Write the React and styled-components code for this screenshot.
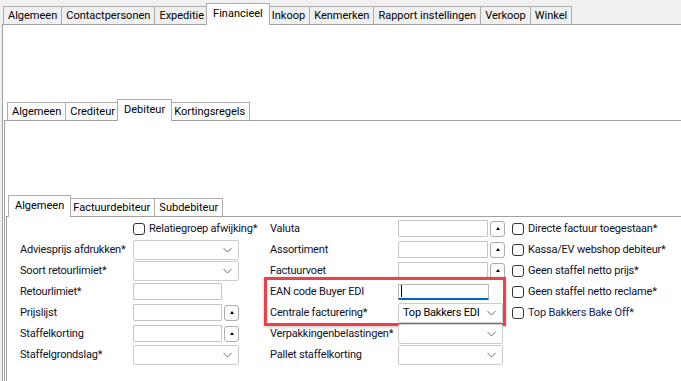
import styled, { createGlobalStyle, css } from "styled-components";

const GlobalStyle = createGlobalStyle`
  html, body {
    margin: 0;
    height: 100%;
    overflow: hidden;
    background: #f0f0f0;
  }
  body {
    font-family: Roboto, "Liberation Sans", Arial, sans-serif;
    font-size: 11px;
    letter-spacing: -0.2px;
    color: #101024;
  }
  #root {
    height: 100%;
  }
`;

const Screen = styled.div`
  box-sizing: border-box;
  height: 100%;
  display: flex;
  flex-direction: column;
  padding: 3px 0 0 2px;
`;

const TabControl = styled.div`
  flex: 1;
  display: flex;
  flex-direction: column;
  min-height: 0;
`;

const TabStrip = styled.div`
  position: relative;
  z-index: 1;
  display: flex;
  align-items: flex-end;
  height: 21px;
  padding-left: ${(p) => p.$inset}px;
`;

const Tab = styled.div`
  box-sizing: border-box;
  position: relative;
  display: flex;
  align-items: center;
  white-space: nowrap;
  height: 18px;
  padding: 0 4px;
  margin-left: -1px;
  border: 1px solid #adadad;
  border-bottom: none;
  background: transparent;
  color: #000;
  letter-spacing: 0;

  &:first-child {
    margin-left: 0;
  }

  ${(p) =>
    p.$active &&
    css`
      z-index: 2;
      height: 22px;
      margin: 0 -2px -1px -3px;
      padding: 0 6px 3px;
      background: #fff;

      &:first-child {
        margin-left: -2px;
      }
    `}
`;

const Panel = styled.div`
  flex: 1;
  display: flex;
  flex-direction: column;
  background: #fff;
  border-top: 1px solid #a0a0a0;
  border-left: 1px solid #a0a0a0;
  padding: ${(p) => p.$top}px 0 0 ${(p) => p.$left}px;
`;

const Form = styled.div`
  display: flex;
  align-items: flex-start;
`;

const Column = styled.div`
  flex: none;
  display: flex;
  flex-direction: column;
  width: ${(p) => (p.$w ? `${p.$w}px` : "auto")};
  margin-left: ${(p) => p.$gap || 0}px;
`;

const Row = styled.div`
  display: flex;
  align-items: center;
  height: 21px;
  white-space: nowrap;
`;

const Label = styled.span`
  flex: none;
  width: ${(p) => p.$w}px;
  white-space: nowrap;
`;

const Highlight = styled.div`
  margin: -4px -1px -3px -6px;
  padding: 1px 0 0 3px;
  border: 3px solid #e8434b;
  box-shadow: 0 1px 3px rgba(0, 0, 0, 0.25);
`;

const ComboBox = styled.div`
  box-sizing: border-box;
  flex: none;
  display: flex;
  align-items: center;
  justify-content: space-between;
  width: ${(p) => p.$w}px;
  height: 20px;
  padding: 0 6px 0 4px;
  border: 1px solid #cccccc;
  border-radius: 2px;
  background: #fff;
  color: #000;
`;

const TextBox = styled.div`
  box-sizing: border-box;
  flex: none;
  display: flex;
  align-items: center;
  width: ${(p) => p.$w}px;
  height: 17px;
  padding-left: 2px;
  border: 1px solid #c4c4c4;
  border-radius: 1px;
  background: #fff;

  ${(p) =>
    p.$focused &&
    css`
      height: 16px;
      border-color: #b8b8b8;
      border-bottom: 2px solid #0067c0;
    `}
`;

const Caret = styled.span`
  width: 1px;
  height: 12px;
  background: #000;
`;

const PickButton = styled.div`
  box-sizing: border-box;
  flex: none;
  display: flex;
  align-items: center;
  justify-content: center;
  width: 15px;
  height: 16px;
  margin-left: 2px;
  border: 1px solid #adadad;
  border-radius: 3px;
  background: #fdfdfd;

  &::after {
    content: "";
    border-left: 2.5px solid transparent;
    border-right: 2.5px solid transparent;
    border-bottom: 3px solid #000;
  }
`;

const CheckBox = styled.span`
  box-sizing: border-box;
  flex: none;
  width: 12px;
  height: 12px;
  margin-right: 4px;
  border: 1px solid #333;
  border-radius: 3px;
  background: #fff;
`;

const CheckText = styled.span`
  color: ${(p) => (p.$accent ? "#24184c" : "inherit")};
`;

const Chevron = () => (
  <svg width="9" height="6" viewBox="0 0 9 6">
    <path d="M0.5 1 L4.5 5 L8.5 1" fill="none" stroke="#6a6a6a" strokeWidth="1" />
  </svg>
);

const Combo = ({ w = 106, value }) => (
  <ComboBox $w={w}>
    <span>{value}</span>
    <Chevron />
  </ComboBox>
);

const Lookup = ({ w }) => (
  <>
    <TextBox $w={w} />
    <PickButton />
  </>
);

const Check = ({ children, accent }) => (
  <Row>
    <CheckBox />
    <CheckText $accent={accent}>{children}</CheckText>
  </Row>
);

const Tabs = ({ items, active, inset }) => (
  <TabStrip $inset={inset}>
    {items.map((t) => (
      <Tab key={t} $active={t === active}>
        {t}
      </Tab>
    ))}
  </TabStrip>
);

const topTabs = [
  "Algemeen",
  "Contactpersonen",
  "Expeditie",
  "Financieel",
  "Inkoop",
  "Kenmerken",
  "Rapport instellingen",
  "Verkoop",
  "Winkel",
];

const App = () => {
  return (
    <>
      <GlobalStyle />
      <Screen>
        <TabControl>
          <Tabs items={topTabs} active="Financieel" inset={1} />
          <Panel $top={74} $left={1}>
            <TabControl>
              <Tabs items={["Algemeen", "Crediteur", "Debiteur", "Kortingsregels"]} active="Debiteur" inset={3} />
              <Panel $top={74} $left={1}>
                <TabControl>
                  <Tabs items={["Algemeen", "Factuurdebiteur", "Subdebiteur"]} active="Algemeen" inset={4} />
                  <Panel $top={1} $left={13}>
                    <Form>
                      <Column $w={220}>
                        <Row>
                          <Label $w={113} />
                          <CheckBox />
                          <span>Relatiegroep afwijking*</span>
                        </Row>
                        <Row>
                          <Label $w={113}>Adviesprijs afdrukken*</Label>
                          <Combo />
                        </Row>
                        <Row>
                          <Label $w={113}>Soort retourlimiet*</Label>
                          <Combo />
                        </Row>
                        <Row>
                          <Label $w={113}>Retourlimiet*</Label>
                          <TextBox $w={89} />
                        </Row>
                        <Row>
                          <Label $w={113}>Prijslijst</Label>
                          <Lookup w={89} />
                        </Row>
                        <Row>
                          <Label $w={113}>Staffelkorting</Label>
                          <Lookup w={89} />
                        </Row>
                        <Row>
                          <Label $w={113}>Staffelgrondslag*</Label>
                          <Combo />
                        </Row>
                      </Column>

                      <Column $w={235} $gap={30}>
                        <Row>
                          <Label $w={128}>Valuta</Label>
                          <Lookup w={90} />
                        </Row>
                        <Row>
                          <Label $w={128}>Assortiment</Label>
                          <Lookup w={90} />
                        </Row>
                        <Row>
                          <Label $w={128}>Factuurvoet</Label>
                          <Lookup w={90} />
                        </Row>
                        <Highlight>
                          <Row>
                            <Label $w={128}>EAN code Buyer EDI</Label>
                            <TextBox $w={91} $focused>
                              <Caret />
                            </TextBox>
                          </Row>
                          <Row>
                            <Label $w={128}>Centrale facturering*</Label>
                            <Combo w={105} value="Top Bakkers EDI" />
                          </Row>
                        </Highlight>
                        <Row>
                          <Label $w={128}>Verpakkingenbelastingen*</Label>
                          <Combo w={105} />
                        </Row>
                        <Row>
                          <Label $w={128}>Pallet staffelkorting</Label>
                          <Combo w={105} />
                        </Row>
                      </Column>

                      <Column $gap={7}>
                        <Check>Directe factuur toegestaan*</Check>
                        <Check>Kassa/EV webshop debiteur*</Check>
                        <Check>Geen staffel netto prijs*</Check>
                        <Check>Geen staffel netto reclame*</Check>
                        <Check accent>Top Bakkers Bake Off*</Check>
                      </Column>
                    </Form>
                  </Panel>
                </TabControl>
              </Panel>
            </TabControl>
          </Panel>
        </TabControl>
      </Screen>
    </>
  );
};

export default App;
